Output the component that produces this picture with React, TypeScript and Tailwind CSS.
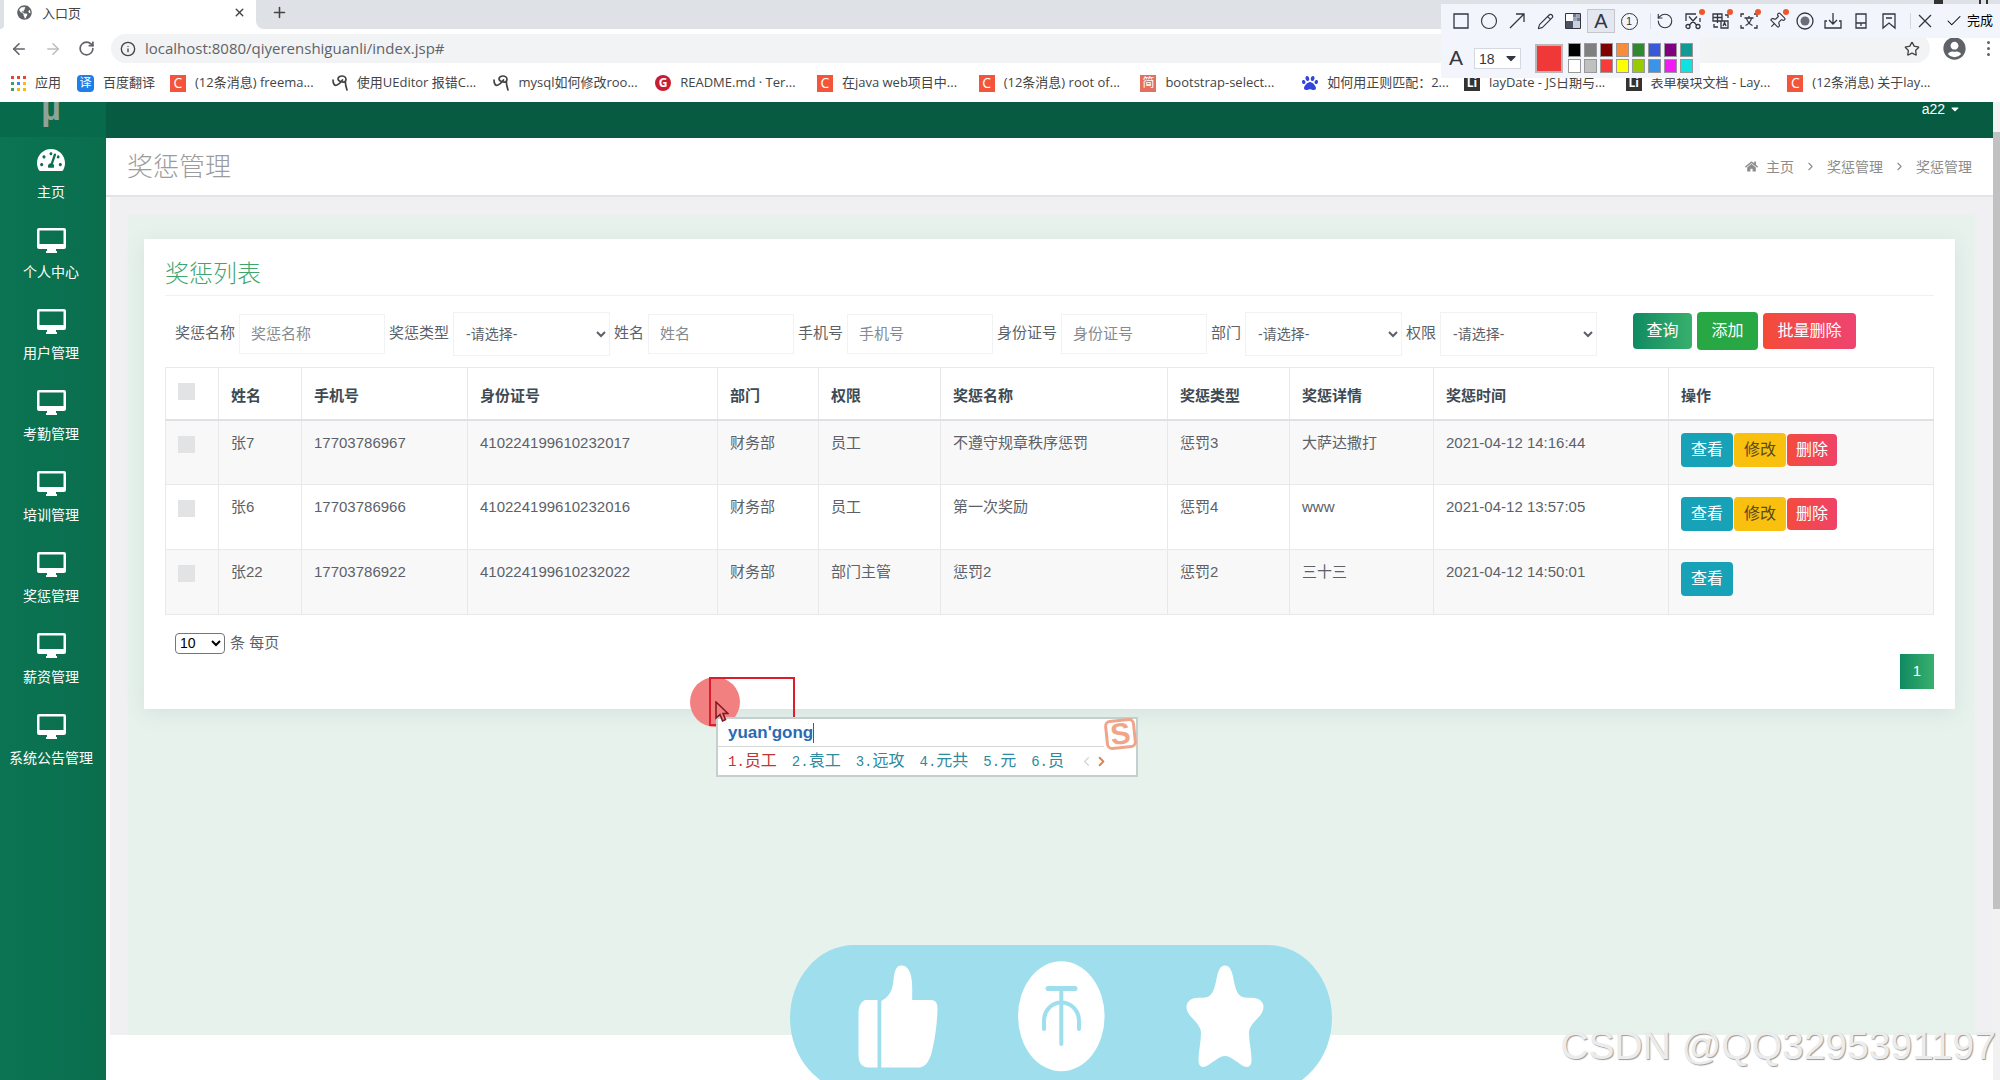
import type { ReactNode } from "react";
import {
  ArrowLeft,
  ArrowRight,
  Check,
  ChevronLeft,
  ChevronRight,
  Circle,
  Info,
  Pencil,
  Pin,
  Plus,
  RotateCcw,
  RotateCw,
  Star,
  X,
} from "lucide-react";
import { FaCaretDown, FaGlobeAmericas, FaHome, FaPaw, FaTachometerAlt, FaUserCircle } from "react-icons/fa";

const bookmarks = [
  { label: "(12条消息) freema...", kind: "csdn" },
  { label: "使用UEditor 报错C...", kind: "swirl" },
  { label: "mysql如何修改roo...", kind: "swirl" },
  { label: "README.md · Ter...", kind: "gitee" },
  { label: "在java web项目中...", kind: "csdn" },
  { label: "(12条消息) root of...", kind: "csdn" },
  { label: "bootstrap-select...", kind: "jian" },
  { label: "如何用正则匹配：2...", kind: "baidu" },
  { label: "layDate - JS日期与...", kind: "layui" },
  { label: "表单模块文档 - Lay...", kind: "layui" },
  { label: "(12条消息) 关于lay...", kind: "csdn" },
];

const menu = ["主页", "个人中心", "用户管理", "考勤管理", "培训管理", "奖惩管理", "薪资管理", "系统公告管理"];

const filters = [
  { id: "title", label: "奖惩名称", type: "text" },
  { id: "type", label: "奖惩类型", type: "select" },
  { id: "name", label: "姓名", type: "text" },
  { id: "phone", label: "手机号", type: "text" },
  { id: "idcard", label: "身份证号", type: "text" },
  { id: "dept", label: "部门", type: "select" },
  { id: "role", label: "权限", type: "select" },
];

const columns = [
  { label: "姓名", width: "w-[83px]" },
  { label: "手机号", width: "w-[166px]" },
  { label: "身份证号", width: "w-[250px]" },
  { label: "部门", width: "w-[101px]" },
  { label: "权限", width: "w-[122px]" },
  { label: "奖惩名称", width: "w-[227px]" },
  { label: "奖惩类型", width: "w-[122px]" },
  { label: "奖惩详情", width: "w-[144px]" },
  { label: "奖惩时间", width: "w-[235px]" },
  { label: "操作", width: "" },
];

const rows = [
  {
    cells: ["张7", "17703786967", "410224199610232017", "财务部", "员工", "不遵守规章秩序惩罚", "惩罚3", "大萨达撒打", "2021-04-12 14:16:44"],
    editable: true,
  },
  {
    cells: ["张6", "17703786966", "410224199610232016", "财务部", "员工", "第一次奖励", "惩罚4", "www", "2021-04-12 13:57:05"],
    editable: true,
  },
  {
    cells: ["张22", "17703786922", "410224199610232022", "财务部", "部门主管", "惩罚2", "惩罚2", "三十三", "2021-04-12 14:50:01"],
    editable: false,
  },
];

const swatches = [
  "bg-black", "bg-[#808080]", "bg-[#800000]", "bg-[#f88c3a]", "bg-[#2f8a2f]", "bg-[#385ad8]", "bg-[#800080]", "bg-[#109a94]",
  "bg-white", "bg-[#c0c0c0]", "bg-[#f93a3a]", "bg-[#ffff00]", "bg-[#99cc00]", "bg-[#3a94ea]", "bg-[#f31bf3]", "bg-[#10e2e2]",
];

const candidates = ["员工", "袁工", "远攻", "元共", "元", "员"];

const BookmarkIcon = ({ kind }: { kind: string }) => {
  if (kind === "csdn")
    return <span className="flex h-[17px] w-4 shrink-0 items-center justify-center bg-[#f4553a] text-sm text-white">C</span>;
  if (kind === "gitee")
    return <span className="flex h-4 w-4 shrink-0 items-center justify-center rounded-full bg-[#c71d33] text-xs font-bold text-white">G</span>;
  if (kind === "jian")
    return <span className="flex h-[17px] w-4 shrink-0 items-center justify-center bg-[#e26f60] text-xs text-white">简</span>;
  if (kind === "layui")
    return <span className="flex h-4 w-4 shrink-0 items-center justify-center bg-[#333] text-xs font-bold text-white">Li</span>;
  if (kind === "baidu") return <FaPaw className="h-4 w-4 shrink-0 text-[#3245df]" />;
  return (
    <svg viewBox="0 0 16 16" className="h-4 w-4 shrink-0" fill="none" stroke="#444" strokeWidth="1.7" strokeLinecap="round">
      <path d="M1 5c0 4 1.500 6 4 5s4-3 5.500-5M6 4c0-2 2-3 4-3s4 1.500 4 3.500-2 3-4 2.500-4-1-4-3M13.500 6c-.5 3 .5 6 1.500 9" />
    </svg>
  );
};

const BrowserChrome = () => (
  <header className="bg-white text-[#444]">
    <div className="flex h-[29px]">
      <div className="w-1 rounded-br-lg bg-[#dee1e6]" />
      <div className="flex w-[252px] items-center pr-[10px] pb-1 pl-[13px]">
        <FaGlobeAmericas className="h-[15px] w-[15px] text-[#5f6368]" />
        <span className="ml-[10px] flex-1 text-[13px] leading-5">入口页</span>
        <button aria-label="关闭标签页">
          <X size={13} strokeWidth={2.5} />
        </button>
      </div>
      <div className="flex flex-1 items-center rounded-bl-lg bg-[#dee1e6] pb-1 pl-[15px]">
        <button aria-label="新标签页">
          <Plus size={17} strokeWidth={2.2} />
        </button>
        <div className="mb-[22px] ml-auto flex gap-9 pr-3">
          <span className="h-1 w-[9px] bg-[#333]" />
          <span className="h-1 w-[9px] border-x-2 border-[#333]" />
        </div>
      </div>
    </div>

    <div className="flex h-[39px] items-center pr-1 pl-[10px]">
      <button aria-label="后退"><ArrowLeft size={18} strokeWidth={2.2} className="text-[#5f6368]" /></button>
      <button aria-label="前进" className="ml-4"><ArrowRight size={18} className="text-[#bbbdc0]" /></button>
      <button aria-label="刷新" className="ml-4"><RotateCw size={17} strokeWidth={2.4} className="text-[#5f6368]" /></button>
      <div className="ml-4 flex h-[29px] flex-1 items-center rounded-full bg-[#f1f3f4] pr-[10px] pl-[9px]">
        <Info size={16} />
        <input
          aria-label="地址"
          defaultValue="localhost:8080/qiyerenshiguanli/index.jsp#"
          className="ml-[9px] flex-1 bg-transparent text-[15px] text-[#5f6368] outline-none"
        />
        <button aria-label="收藏"><Star size={16} /></button>
      </div>
      <FaUserCircle className="ml-[13px] h-[23px] w-[23px] text-[#5f6368]" />
      <button aria-label="菜单" className="ml-[14px] flex w-4 flex-col items-center gap-[3px]">
        <span className="h-[3px] w-[3px] rounded-full bg-[#5f6368]" />
        <span className="h-[3px] w-[3px] rounded-full bg-[#5f6368]" />
        <span className="h-[3px] w-[3px] rounded-full bg-[#5f6368]" />
      </button>
    </div>

    <nav className="flex h-[34px] items-center pr-[51px] pb-1 pl-[11px] text-[13px] whitespace-nowrap">
      <a href="#" className="flex w-[66px] items-center gap-[9px]">
        <svg viewBox="0 0 15 15" className="h-[15px] w-[15px]">
          <path fill="#e94335" d="M0 0h3v3H0zM6 0h3v3H6zM12 0h3v3h-3z" />
          <path fill="#34a853" d="M0 6h3v3H0z" />
          <path fill="#4285f4" d="M6 6h3v3H6z" />
          <path fill="#f6bb05" d="M12 6h3v3h-3zM6 12h3v3H6zM12 12h3v3h-3z" />
          <path fill="#34a853" d="M0 12h3v3H0z" />
        </svg>
        应用
      </a>
      <a href="#" className="flex w-[93px] items-center gap-[9px]">
        <span className="flex h-[17px] w-[17px] items-center justify-center rounded-sm bg-[#1f7ee8] text-xs text-white">译</span>
        百度翻译
      </a>
      {bookmarks.map((b) => (
        <a key={b.label} href="#" className="flex min-w-0 flex-1 items-center gap-[9px]">
          <BookmarkIcon kind={b.kind} />
          {b.label}
        </a>
      ))}
    </nav>
  </header>
);

const Tool = ({ label, badge, active, children }: { label: string; badge?: boolean; active?: boolean; children: ReactNode }) => (
  <button
    aria-label={label}
    className={`relative flex h-6 w-7 items-center justify-center ${active ? "border border-[#c4c6cc] bg-[#e4e7ef]" : ""}`}
  >
    {children}
    {badge && <span className="absolute top-0 right-[2px] h-[6px] w-[6px] rounded-full bg-[#f0562c]" />}
  </button>
);

// thin line glyph on an 18px grid, used by the capture tools
const LineIcon = ({ d }: { d: string }) => (
  <svg viewBox="0 0 18 18" className="h-[18px] w-[18px]" fill="none" stroke="#33363f" strokeWidth="1.3">
    <path d={d} />
  </svg>
);

const CaptureToolbar = () => (
  <div className="absolute top-1 right-0 flex w-[559px] flex-col items-start text-[#33363f]">
    <div className="flex h-[34px] w-full items-center bg-[#f3f5fc] pl-[6px]">
      <Tool label="矩形"><LineIcon d="M2 2h14v14H2z" /></Tool>
      <Tool label="椭圆"><Circle size={18} strokeWidth={1.5} /></Tool>
      <Tool label="箭头"><LineIcon d="M2 16 16 2M8 2h8v8" /></Tool>
      <Tool label="画笔"><Pencil size={17} strokeWidth={1.6} /></Tool>
      <Tool label="马赛克">
        <svg viewBox="0 0 16 16" className="h-4 w-4">
          <path d="M.5.5h15v15H.5z" fill="#fff" stroke="#33363f" />
          <path d="M8 1h3.500v3.500H8zM11.500 4.500H15V8h-3.500z" fill="#6f7890" />
          <path d="M11.500 1H15v3.500h-3.500zM8 4.500h3.500V8H8z" fill="#98a2b8" />
          <path d="M1 8h7v7H1z" fill="#4c5263" />
          <path d="M8 8h7v7H8z" fill="#c9d1e0" />
        </svg>
      </Tool>
      <Tool label="文字" active><span className="text-xl leading-5 font-light">A</span></Tool>
      <Tool label="序号">
        <span className="flex h-[17px] w-[17px] items-center justify-center rounded-full border border-[#33363f] text-[11px]">1</span>
      </Tool>
      <span className="h-4 w-2 border-r border-[#d5d8e0]" />
      <Tool label="撤销"><RotateCcw size={18} strokeWidth={1.5} /></Tool>
      <Tool label="裁剪" badge>
        <LineIcon d="M2 9V2h10M16 6v4M5 4.500l7.500 8.500M13 4.500 5.500 13M6 14.500a2 2 0 1 1-4 0 2 2 0 0 1 4 0zM16 14.500a2 2 0 1 1-4 0 2 2 0 0 1 4 0z" />
      </Tool>
      <Tool label="翻译" badge>
        <LineIcon d="M1 2h9v7H1zM1 5.500h9M5.500 2v9M9 9h7v7H9zM11 14l1.500-3.500L14 14M2 12v3h4M13 3h3v3" />
      </Tool>
      <Tool label="识别文字" badge>
        <LineIcon d="M1 5V2h3M14 2h3v3M17 13v3h-3M4 16H1v-3M4.500 6h9M9 4v2M6.500 6c.5 3 3 6 6 7.500M11.500 6c-.5 3-3 6-6 7.500" />
      </Tool>
      <Tool label="固定" badge><Pin size={18} strokeWidth={1.5} className="rotate-45" /></Tool>
      <Tool label="录制">
        <svg viewBox="0 0 18 18" className="h-[18px] w-[18px]">
          <circle cx="9" cy="9" r="8" fill="none" stroke="#33363f" strokeWidth="1.3" />
          <circle cx="9" cy="9" r="4.500" fill="#6a6e78" />
        </svg>
      </Tool>
      <Tool label="保存"><LineIcon d="M9 1v11M5 8l4 4 4-4M3 9H1v7h16V9h-2" /></Tool>
      <Tool label="发送到手机"><LineIcon d="M4 2h10v14H4zM4 11h10M9 11v3" /></Tool>
      <Tool label="收藏截图"><LineIcon d="M3 2h12v14l-6-5-6 5zM6 6h6" /></Tool>
      <span className="h-4 w-2 border-r border-[#d5d8e0]" />
      <Tool label="取消"><LineIcon d="M3 3l12 12M15 3 3 15" /></Tool>
      <button className="flex items-center gap-1 pl-[6px] text-[13px] whitespace-nowrap text-black">
        <Check size={18} strokeWidth={1.4} />
        完成
      </button>
    </div>
    <div className="flex h-10 w-[259px] items-center bg-[#f3f5fc] pl-2">
      <span className="w-[25px] text-[21px] leading-6 font-light">A</span>
      <label className="sr-only" htmlFor="fontsize">字号</label>
      <div className="relative flex items-center">
        <select id="fontsize" className="h-[21px] w-[47px] appearance-none border border-[#d5d8e0] bg-white pl-1 text-sm">
          <option>18</option>
        </select>
        <FaCaretDown className="pointer-events-none absolute right-1 h-4 w-3" />
      </div>
      <span className="ml-[14px] h-[29px] w-7 border-2 border-[#b9b9b9] bg-[#f03838]" />
      <div className="ml-[5px] grid grid-cols-8 gap-x-[3px] gap-y-[2px]">
        {swatches.map((s) => (
          <button key={s} aria-label="颜色" className={`h-[14px] w-[13px] border border-[#999] ${s}`} />
        ))}
      </div>
    </div>
  </div>
);

const MonitorIcon = () => (
  <svg viewBox="0 0 29 25" className="h-[25px] w-[29px]" fill="currentColor">
    <path fillRule="evenodd" d="M2 0h25a2 2 0 0 1 2 2v17a2 2 0 0 1-2 2h-8v2h1v2H9v-2h1v-2H2a2 2 0 0 1-2-2V2a2 2 0 0 1 2-2zm.500 2.500V16h24V2.500z" />
  </svg>
);

const Sidebar = () => (
  <aside className="w-[106px] shrink-0 bg-linear-to-r from-[#0b7452] to-[#0a6e4d] text-white">
    <div className="flex h-[35px] items-start justify-center overflow-hidden bg-[#076a4a] pr-1 text-[34px] leading-[12px] font-bold text-[#8fa39a]">
      µ
    </div>
    <nav>
      {menu.map((item, i) => (
        <a key={item} href="#" className="flex h-[81px] flex-col items-center gap-[9px] pt-[10px] pr-1 text-sm whitespace-nowrap">
          {i === 0 ? <FaTachometerAlt className="h-[26px] w-7" /> : <MonitorIcon />}
          {item}
        </a>
      ))}
    </nav>
  </aside>
);

const FilterBar = () => (
  <form className="flex items-center gap-1 pl-[10px] text-[15px] whitespace-nowrap">
    {filters.map((f) => (
      <div key={f.id} className="flex items-center gap-1">
        <label htmlFor={f.id} className="pb-[2px]">{f.label}</label>
        {f.type === "text" ? (
          <input
            id={f.id}
            placeholder={f.label}
            className="h-10 w-[146px] border border-[#f1f2f4] px-[11px] pb-[2px] outline-none placeholder:text-[#858a90]"
          />
        ) : (
          <select id={f.id} className="h-11 w-[157px] border border-[#f1f2f4] bg-white pl-2 text-sm">
            <option>-请选择-</option>
          </select>
        )}
      </div>
    ))}
    <div className="ml-8 flex items-center gap-[5px] pb-[6px] text-base text-white">
      <button type="button" className="h-9 w-[59px] rounded-sm bg-linear-to-r from-[#0d8a62] to-[#38b06c]">查询</button>
      <button type="button" className="h-[38px] w-[61px] rounded-sm bg-[#28a745]">添加</button>
      <button type="button" className="h-9 w-[93px] rounded-sm bg-linear-to-r from-[#f44b36] to-[#ef4370]">批量删除</button>
    </div>
  </form>
);

const Tick = ({ label }: { label: string }) => (
  <input type="checkbox" aria-label={label} className="mt-[15px] ml-3 block h-[17px] w-[17px] appearance-none bg-[#e2e3e5]" />
);

const RecordTable = () => (
  <table className="w-full table-fixed border-collapse border border-[#e6e8ea] text-[15px]">
    <thead>
      <tr className="h-[52px] border-b-2 border-[#dee2e6] text-left align-top text-[#3d4a53]">
        <th className="w-[53px] border-r border-[#e6e8ea]"><Tick label="全选" /></th>
        {columns.map((c) => (
          <th key={c.label} className={`border-r border-[#e6e8ea] pt-4 pl-3 leading-6 font-semibold ${c.width}`}>{c.label}</th>
        ))}
      </tr>
    </thead>
    <tbody>
      {rows.map((row) => (
        <tr key={row.cells[1]} className="h-[65px] border-b border-[#e6e8ea] align-top odd:bg-[#f8f8f9]">
          <td className="border-r border-[#e6e8ea]"><Tick label={row.cells[0]} /></td>
          {row.cells.map((cell, i) => (
            <td key={i} className="border-r border-[#e6e8ea] pt-[10px] pl-3 leading-6">{cell}</td>
          ))}
          <td className="pt-3 pl-3">
            <div className="flex items-center gap-px text-base text-white">
              <button className="h-[34px] w-[52px] rounded-sm bg-[#17a2b8]">查看</button>
              {row.editable && <button className="h-[34px] w-[52px] rounded-sm bg-[#f9c010] text-[#5a4a1c]">修改</button>}
              {row.editable && <button className="h-8 w-[50px] rounded-sm bg-linear-to-r from-[#f44b3c] to-[#ef4268]">删除</button>}
            </div>
          </td>
        </tr>
      ))}
    </tbody>
  </table>
);

const Reactions = () => (
  <svg viewBox="0 0 542 135" className="absolute bottom-0 left-[790px] h-[135px] w-[542px]">
    <rect width="542" height="146" rx="64" ry="73" fill="#9fdfed" />
    <g fill="#fff">
      <path d="M75 55h12.500v67.500H78c-6 0-9.500-5-9.500-12V68c0-6 2-11 6.500-13z" />
      <path d="M91.300 122.500V56c8-4 11-11 12-19 .8-9 2-16.500 8.200-16.500 7 0 10.700 8 10.700 22V55h19c5 0 6.500 4 6.300 10-.4 13-2.500 30-6 43-2.500 9-6.500 14.500-13 14.500z" />
      <ellipse cx="271.300" cy="71.300" rx="43.300" ry="55" />
      <path d="M435 20.500c-5 0-6.500 5-8 11-2 9-3 20-12 21-6 .6-12-.5-15.500 3-4.500 4-3.500 10 0 14.500 5 6 11.500 11 11.500 18 0 9-2.500 18-2.500 27 0 6 3 8 7 6.500 7-3 13-10.500 19.500-10.500s12.500 7.500 19.500 10.500c4 1.500 7-.5 7-6.500 0-9-2.500-18-2.500-27 0-7 6.500-12 11.500-18 3.500-4.500 4.500-10.500 0-14.500-3.500-3.500-9.500-2.400-15.500-3-9-1-10-12-12-21-1.500-6-3-11-8-11z" />
    </g>
    <g fill="none" stroke="#9fdfed" strokeWidth="4" strokeLinecap="round">
      <path d="M258 43.500h27" strokeWidth="5" />
      <path d="M271.300 44v55M254 84V76c0-11 8-18.500 17.300-18.500S289 65 289 76v8" />
    </g>
  </svg>
);

const InputMethod = () => (
  <>
    <div className="absolute top-[677px] left-[690px] h-[50px] w-[50px] rounded-full bg-[#f28081]" />
    <div className="absolute top-[677px] left-[709px] h-[49px] w-[86px] border-2 border-[#dc1d2b]" />
    <div className="absolute top-[717px] left-[716px] w-[422px] border-2 border-[#c6cfcf] bg-white">
      <div className="mr-8 flex h-7 items-center border-b border-[#d5d8d8] pl-[10px]">
        <span className="border-r border-[#e02020] text-[17px] leading-5 font-bold text-[#2a6bb5]">yuan'gong</span>
      </div>
      <div className="flex h-7 items-center gap-[15px] pl-[10px] text-base whitespace-nowrap text-[#2d8aa0]">
        {candidates.map((c, i) => (
          <span key={c} className={i === 0 ? "text-[#c03434]" : ""}>
            <span className="font-['Liberation_Mono'] text-sm">{i + 1}.</span>
            {c}
          </span>
        ))}
        <span className="flex items-center">
          <ChevronLeft size={15} className="text-[#d5d5d5]" />
          <ChevronRight size={15} strokeWidth={3} className="text-[#dc8351]" />
        </span>
      </div>
      <span className="absolute top-0 right-0 flex h-[30px] w-[31px] -rotate-6 items-center justify-center rounded-md border-[3px] border-[#f0a58a] text-[30px] leading-none font-bold text-[#f0a58a]">
        S
      </span>
    </div>
    <svg viewBox="0 0 14 22" className="absolute top-[701px] left-[715px] h-[22px] w-[14px]">
      <path d="M1 1v16l4-3.500 2.500 6.500 3-1.300L8 12.500h5z" fill="#f28081" stroke="#7d1720" strokeWidth="1.500" />
    </svg>
  </>
);

const App = () => {
  return (
    <div className="relative flex h-screen flex-col overflow-hidden bg-white font-['Liberation_Sans','Noto_Sans_CJK_SC',sans-serif] text-[#5c6168]">
      <div className="font-['Open_Sans','Noto_Sans_CJK_SC',sans-serif]">
        <BrowserChrome />
      </div>

      <div className="flex min-h-0 flex-1">
        <Sidebar />
        <main className="flex min-w-0 flex-1 flex-col">
          <div className="flex h-9 shrink-0 items-start justify-end bg-[#065b40] pr-8 text-white">
            <button className="flex items-center gap-1 text-sm leading-[14px]">
              a22 <FaCaretDown className="h-3 w-3" />
            </button>
          </div>

          <div className="flex h-[59px] shrink-0 items-center justify-between border-b-2 border-[#e3e4e6] pr-[21px] pl-[21px]">
            <h1 className="pt-[2px] text-[26px] font-light text-[#9c9c9c]">奖惩管理</h1>
            <nav className="flex items-center text-sm text-[#8c8c8c]">
              <FaHome className="mr-2 h-[13px] w-[13px]" />
              <a href="#">主页</a>
              <ChevronRight size={13} className="mx-[10px]" />
              <a href="#">奖惩管理</a>
              <ChevronRight size={13} className="mx-[10px]" />
              <a href="#">奖惩管理</a>
            </nav>
          </div>

          <div className="ml-1 flex-1 bg-[#f0f0f3] px-[18px] pt-[18px]">
            <div className="h-full bg-[#e7f2ed] pt-6 pr-5 pl-4">
              <section className="bg-white px-[21px] pt-[19px] pb-5 shadow-[0_4px_20px_rgba(60,90,90,0.1)]">
                <h2 className="h-[38px] border-b border-[#f0f1f3] text-2xl leading-8 font-light text-[#3fa56c]">奖惩列表</h2>
                <div className="flex h-[71px] items-center pt-[5px]">
                  <FilterBar />
                </div>
                <RecordTable />
                <div className="flex justify-between pt-[17px]">
                  <label className="flex h-[22px] items-center gap-[5px] pl-[10px] text-[15px]">
                    <select className="h-[21px] w-[50px] rounded-sm border border-[#767676] bg-white text-sm text-black">
                      <option>10</option>
                    </select>
                    条 每页
                  </label>
                  <button className="mt-[22px] h-[35px] w-[34px] bg-linear-to-r from-[#0d8a62] to-[#38b06c] text-[15px] text-white">1</button>
                </div>
              </section>
            </div>
          </div>
          <div className="h-[45px] shrink-0 bg-white" />
        </main>

        <div className="flex w-[7px] shrink-0 flex-col bg-[#f1f1f1] pt-[30px]">
          <div className="h-[82%] bg-[#c1c1c1]" />
        </div>
      </div>

      <CaptureToolbar />
      <InputMethod />
      <Reactions />
      <div className="absolute right-1 bottom-3 text-[39px] leading-[44px] text-[#ececec] [text-shadow:1px_1px_1px_#999]">
        CSDN @QQ3295391197
      </div>
    </div>
  );
};

export default App;
